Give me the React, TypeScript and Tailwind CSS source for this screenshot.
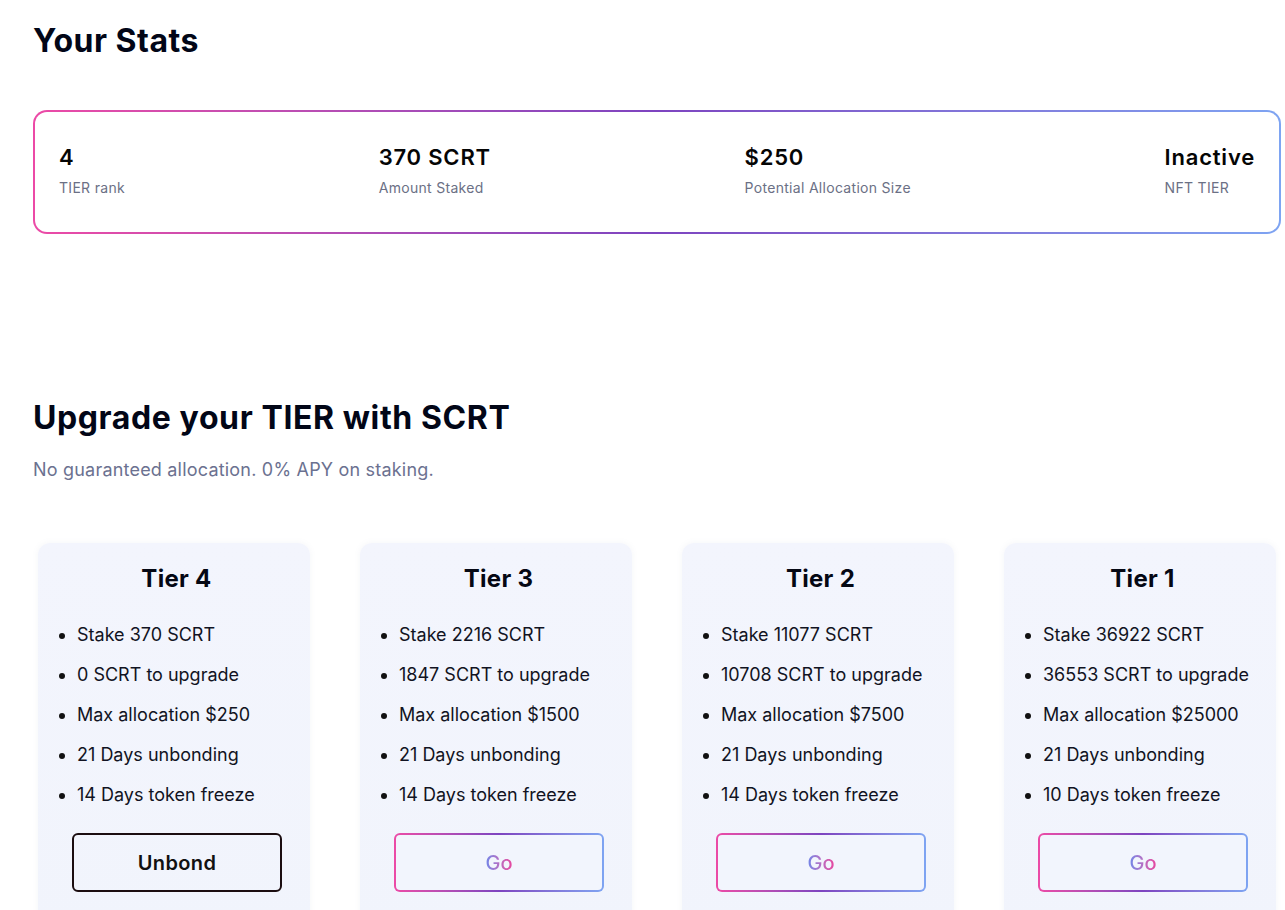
import React from 'react'

type Tier = {
    name: string
    stake: number
    toUpgrade: number
    maxAllocation: number
    unbondingDays: number
    freezeDays: number
    current?: boolean
}

const tiers: Tier[] = [
    { name: 'Tier 4', stake: 370, toUpgrade: 0, maxAllocation: 250, unbondingDays: 21, freezeDays: 14, current: true },
    { name: 'Tier 3', stake: 2216, toUpgrade: 1847, maxAllocation: 1500, unbondingDays: 21, freezeDays: 14 },
    { name: 'Tier 2', stake: 11077, toUpgrade: 10708, maxAllocation: 7500, unbondingDays: 21, freezeDays: 14 },
    { name: 'Tier 1', stake: 36922, toUpgrade: 36553, maxAllocation: 25000, unbondingDays: 21, freezeDays: 10 },
]

const stats = [
    { value: '4', label: 'TIER rank' },
    { value: '370 SCRT', label: 'Amount Staked' },
    { value: '$250', label: 'Potential Allocation Size' },
    { value: 'Inactive', label: 'NFT TIER' },
]

const font = "font-['Inter','Open_Sans',sans-serif]"

const TierCard = ({ tier }: { tier: Tier }) => {
    return (
        <div className='w-[272px] h-[400px] rounded-t-xl bg-gradient-to-b from-[#f3f5fd] to-[#f1f4fc] shadow-[0_0_6px_rgba(120,130,170,0.08)] px-[34px] pt-[20px]'>
            <h3 className='text-center pl-[5px] text-[24px] leading-[32px] font-bold text-[#050814] tracking-[0.3px]'>{tier.name}</h3>
            <ul className='mt-[26px] list-disc pl-[5px] marker:text-[#111] flex flex-col gap-[12px] text-[18px] leading-[28px] text-[#111322] whitespace-nowrap'>
                <li>Stake {tier.stake} SCRT</li>
                <li>{tier.toUpgrade} SCRT to upgrade</li>
                <li>Max allocation ${tier.maxAllocation}</li>
                <li>{tier.unbondingDays} Days unbonding</li>
                <li>{tier.freezeDays} Days token freeze</li>
            </ul>
            {
                tier.current ? (
                    <button className='mt-[24px] w-[210px] h-[59px] rounded-md border-2 border-[#1b0d10] text-[20px] font-semibold text-[#111] tracking-[0.4px]'>
                        Unbond
                    </button>
                ) : (
                    <div className='mt-[24px] w-[210px] h-[59px] rounded-md p-[2px] bg-gradient-to-r from-[#ec4aa6] via-[#7d44c0] to-[#7ea4f2]'>
                        <button className='w-full h-full rounded-[4px] bg-[#f2f5fd] text-[20px] font-medium'>
                            <span className='bg-gradient-to-r from-[#6a86ea] to-[#ea3f9c] bg-clip-text text-transparent'>Go</span>
                        </button>
                    </div>
                )
            }
        </div>
    )
}

const App = () => {
    return (
        <div className={`min-h-screen bg-white ${font} pl-[33px] pr-[4px] overflow-hidden`}>
            <h1 className='pt-[21px] text-[32px] leading-[40px] font-bold text-[#020617] tracking-[0.5px]'>Your Stats</h1>

            <div className='mt-[49px] w-[1248px] h-[124px] rounded-[14px] p-[2px] bg-gradient-to-r from-[#ec4aa6] via-[#7d44c0] to-[#7ea4f2]'>
                <div className='w-full h-full rounded-[12px] bg-white flex items-center justify-between px-[24px] pb-[3px]'>
                    {
                        stats.map((s) => (
                            <div key={s.label} className='flex flex-col gap-[7px]'>
                                <p className='text-[22px] leading-[28px] font-semibold text-[#050505] tracking-[0.8px]'>{s.value}</p>
                                <p className='text-[14px] leading-[20px] text-[#6b7085] tracking-[0.3px]'>{s.label}</p>
                            </div>
                        ))
                    }
                </div>
            </div>

            <h2 className='mt-[164px] text-[32px] leading-[40px] font-bold text-[#020617] tracking-[0.6px]'>Upgrade your TIER with SCRT</h2>
            <p className='mt-[18px] text-[18px] leading-[28px] text-[#6b7190] tracking-[0.2px]'>No guaranteed allocation. 0% APY on staking.</p>

            <div className='mt-[59px] pl-[5px] flex gap-[50px]'>
                {
                    tiers.map((t) => (
                        <TierCard key={t.name} tier={t} />
                    ))
                }
            </div>
        </div>
    )
}

export default App
